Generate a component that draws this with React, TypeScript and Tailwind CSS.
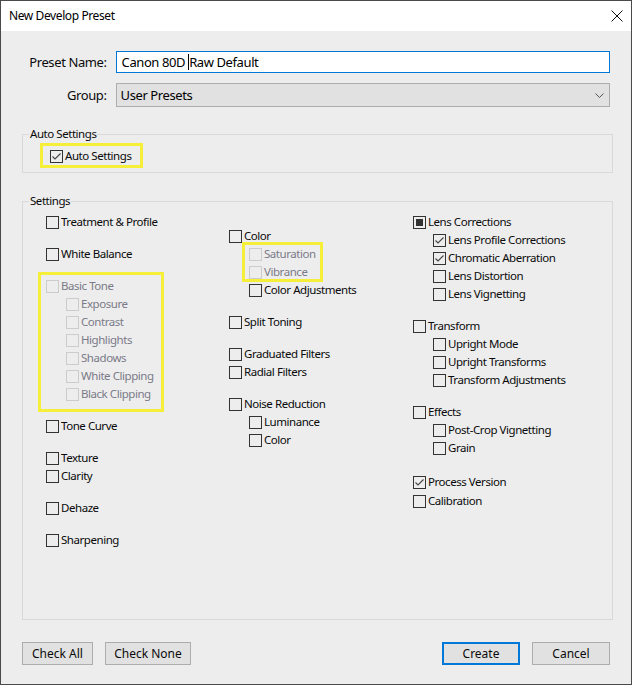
import React from "react";

type State = "off" | "on" | "mixed";

function Box({ state = "off", disabled = false }: { state?: State; disabled?: boolean }) {
  return (
    <span
      className={`flex h-[13px] w-[13px] shrink-0 items-center justify-center border ${
        disabled ? "border-[#cccccc]" : "border-[#333333]"
      }`}
    >
      {state === "on" && (
        <svg width="11" height="11" viewBox="0 0 11 11">
          <path d="M1.5 5.5 L4 8 L9.5 2.5" fill="none" stroke="#444444" strokeWidth="1.1" />
        </svg>
      )}
      {state === "mixed" && <span className="h-[7px] w-[7px] bg-[#333333]" />}
    </span>
  );
}

function Row({
  label,
  state = "off",
  disabled = false,
  sub = false,
  className = "",
}: {
  label: string;
  state?: State;
  disabled?: boolean;
  sub?: boolean;
  className?: string;
}) {
  return (
    <div className={`flex h-[18px] items-center ${sub ? "pl-[20px]" : ""} ${className}`}>
      <Box state={state} disabled={disabled} />
      <span className={`ml-[2px] whitespace-nowrap ${disabled ? "text-[#7a7a88]" : "text-[#0a0a0a]"}`}>
        {label}
      </span>
    </div>
  );
}

function Button({ label, primary = false, className = "" }: { label: string; primary?: boolean; className?: string }) {
  return (
    <button
      className={`flex h-[23px] items-center justify-center bg-[#e1e1e1] text-[12px] tracking-normal text-[#0a0a0a] ${
        primary ? "border-2 border-[#0078d7]" : "border border-[#adadad]"
      } ${className}`}
    >
      {label}
    </button>
  );
}

export default function App() {
  return (
    <div className="flex h-[685px] w-[632px] flex-col border border-[#4a4a4a] bg-[#ededed] font-['Noto_Sans','Liberation_Sans',sans-serif] text-[11.5px] leading-[16px] tracking-[-0.45px] text-[#0a0a0a]">
      {/* title bar */}
      <div className="flex h-[30px] shrink-0 items-center justify-between bg-white pl-[8px] pr-[8px]">
        <span className="text-[12px] tracking-[-0.4px] text-black">New Develop Preset</span>
        <svg width="12" height="12" viewBox="0 0 12 12">
          <path d="M0.5 0.5 L11.5 11.5 M11.5 0.5 L0.5 11.5" stroke="#111111" strokeWidth="1" />
        </svg>
      </div>

      <div className="flex flex-col px-[21px]">
        {/* name / group */}
        <div className="mt-[20px] flex items-center text-[13px] tracking-[-0.4px]">
          <span className="w-[85px] text-right">Preset Name:</span>
          <div className="ml-[9px] flex h-[22px] w-[497px] items-center border border-[#0078d7] bg-white pl-[5px] text-black">
            <span className="whitespace-pre">Canon 80D </span>
            <span className="h-[16px] w-px bg-black" />
            <span className="whitespace-pre">Raw Default</span>
          </div>
        </div>
        <div className="mt-[10px] flex items-center text-[13px] tracking-[-0.4px]">
          <span className="w-[85px] text-right">Group:</span>
          <div className="ml-[9px] flex h-[24px] w-[497px] items-center justify-between border border-[#adadad] bg-[#e1e1e1] pl-[4px] pr-[5px] text-black">
            <span>User Presets</span>
            <svg width="9" height="5" viewBox="0 0 9 5">
              <path d="M0.5 0.5 L4.5 4.5 L8.5 0.5" fill="none" stroke="#555555" strokeWidth="1" />
            </svg>
          </div>
        </div>

        {/* auto settings */}
        <fieldset className="mt-[19px] w-[591px] border border-[#d9d9d9]">
          <legend className="ml-[6px] px-[1px]">Auto Settings</legend>
          <div className="pb-[7px] pl-[27px] pt-[5px]">
            <div className="relative w-fit">
              <Row label="Auto Settings" state="on" />
              <div className="pointer-events-none absolute -left-[10px] -top-[4px] h-[25px] w-[103px] border-[3px] border-[#f5ef3a]" />
            </div>
          </div>
        </fieldset>

        {/* settings */}
        <fieldset className="mt-[20px] h-[427px] w-[591px] border border-[#d9d9d9]">
          <legend className="ml-[6px] px-[1px]">Settings</legend>
          <div className="grid grid-cols-[183px_184px_1fr] pl-[23px] pt-[4px]">
            <div className="flex flex-col">
              <Row label="Treatment & Profile" />
              <Row label="White Balance" className="mt-[14px]" />
              <div className="relative mt-[14px]">
                <Row label="Basic Tone" disabled />
                <Row label="Exposure" disabled sub />
                <Row label="Contrast" disabled sub />
                <Row label="Highlights" disabled sub />
                <Row label="Shadows" disabled sub />
                <Row label="White Clipping" disabled sub />
                <Row label="Black Clipping" disabled sub />
                <div className="pointer-events-none absolute -bottom-[9px] -left-[8px] -top-[5px] w-[126px] border-[3px] border-[#f5ef3a]" />
              </div>
              <Row label="Tone Curve" className="mt-[14px]" />
              <Row label="Texture" className="mt-[14px]" />
              <Row label="Clarity" />
              <Row label="Dehaze" className="mt-[14px]" />
              <Row label="Sharpening" className="mt-[14px]" />
            </div>

            <div className="mt-[14px] flex flex-col">
              <Row label="Color" />
              <div className="relative">
                <Row label="Saturation" disabled sub />
                <Row label="Vibrance" disabled sub />
                <div className="pointer-events-none absolute -top-[3px] left-[13px] h-[40px] w-[81px] border-[3px] border-[#f5ef3a]" />
              </div>
              <Row label="Color Adjustments" sub />
              <Row label="Split Toning" className="mt-[14px]" />
              <Row label="Graduated Filters" className="mt-[14px]" />
              <Row label="Radial Filters" />
              <Row label="Noise Reduction" className="mt-[14px]" />
              <Row label="Luminance" sub />
              <Row label="Color" sub />
            </div>

            <div className="flex flex-col">
              <Row label="Lens Corrections" state="mixed" />
              <Row label="Lens Profile Corrections" state="on" sub />
              <Row label="Chromatic Aberration" state="on" sub />
              <Row label="Lens Distortion" sub />
              <Row label="Lens Vignetting" sub />
              <Row label="Transform" className="mt-[14px]" />
              <Row label="Upright Mode" sub />
              <Row label="Upright Transforms" sub />
              <Row label="Transform Adjustments" sub />
              <Row label="Effects" className="mt-[14px]" />
              <Row label="Post-Crop Vignetting" sub />
              <Row label="Grain" sub />
              <Row label="Process Version" state="on" className="mt-[16px]" />
              <Row label="Calibration" className="mt-px" />
            </div>
          </div>
        </fieldset>

        {/* buttons */}
        <div className="mt-[22px] flex items-center">
          <Button label="Check All" className="w-[71px]" />
          <Button label="Check None" className="ml-[12px] w-[86px]" />
          <Button label="Create" primary className="ml-auto w-[78px]" />
          <Button label="Cancel" className="ml-[12px] w-[78px]" />
        </div>
      </div>
    </div>
  );
}
